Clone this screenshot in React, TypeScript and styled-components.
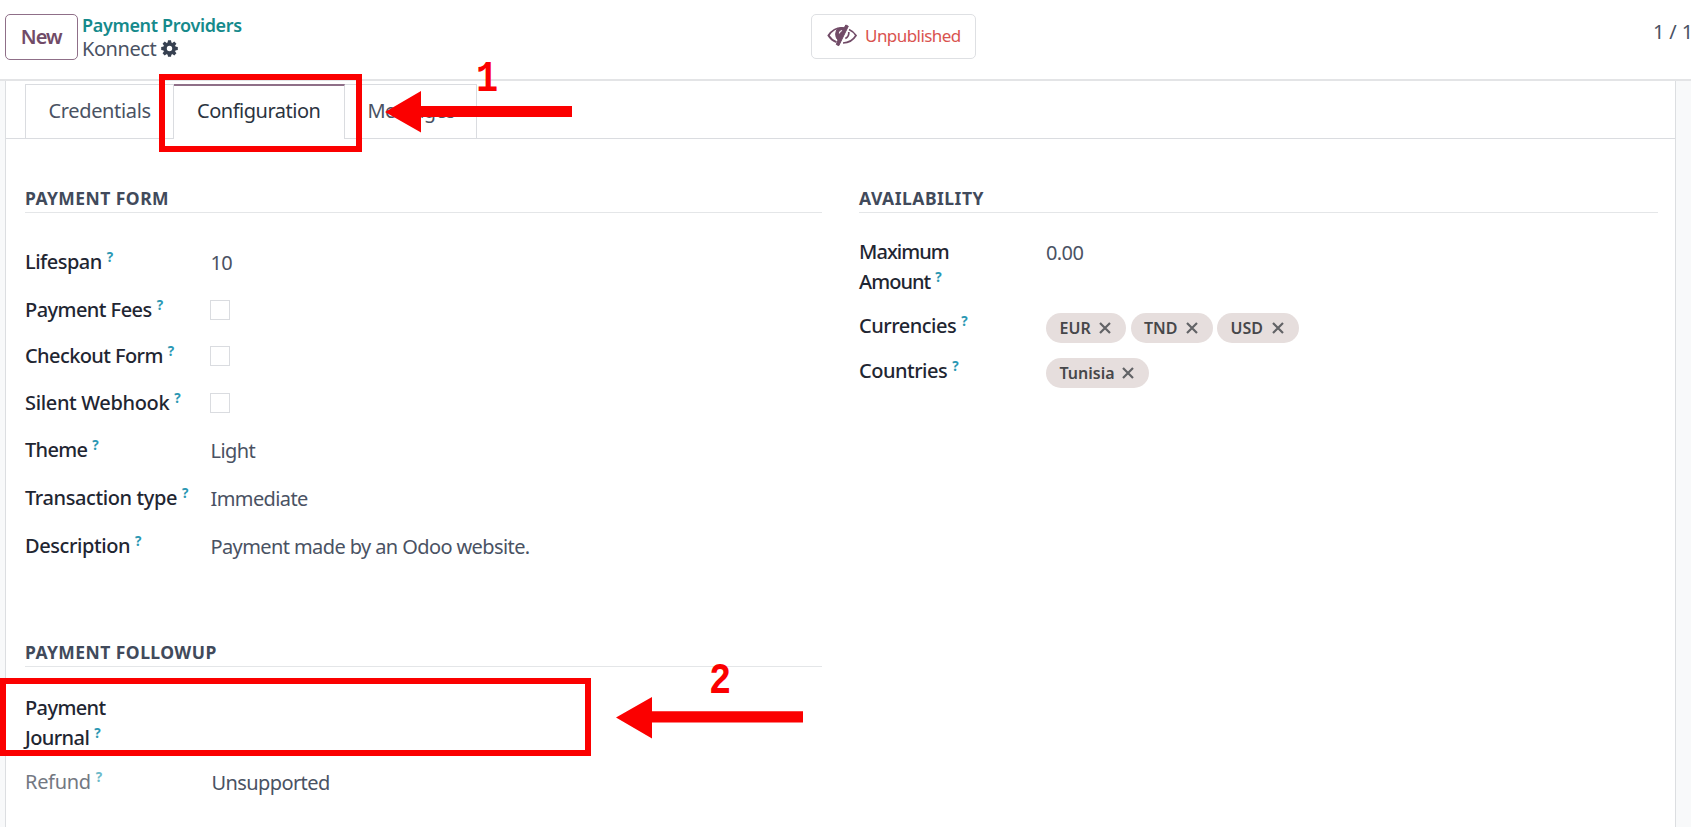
import React from "react";
import styled, { createGlobalStyle } from "styled-components";

const Global = createGlobalStyle`
  * { box-sizing: border-box; }
  html, body { margin: 0; height: 100%; overflow: hidden; }
  body {
    background: #f8f9fa;
    color: #4a5263;
    font-family: "Noto Sans", sans-serif;
    font-size: 20px;
    line-height: 30px;
    letter-spacing: -0.5px;
  }
`;

const Page = styled.div`
  position: relative;
  width: 1691px;
  height: 827px;
  overflow: hidden;
`;

const Header = styled.header`
  display: flex;
  align-items: flex-start;
  height: 81px;
  padding: 14px 0 0 5px;
  background: #fff;
  border-bottom: 2px solid #e3e4e6;
`;

const NewButton = styled.button`
  width: 72.5px;
  height: 46px;
  padding: 0;
  border: 1.5px solid #8f6f88;
  border-radius: 5px;
  background: #fff;
  color: #714b67;
  font: 600 20px/30px "Noto Sans", sans-serif;
  letter-spacing: -0.9px;
`;

const Breadcrumb = styled.div`
  display: flex;
  flex-direction: column;
  width: 729px;
  margin-left: 4.5px;
  line-height: 23px;
`;

const ParentLink = styled.a`
  color: #158a8c;
  font-size: 18px;
  font-weight: 600;
  letter-spacing: -0.33px;
`;

const Current = styled.span`
  display: flex;
  align-items: center;
  gap: 5px;
  letter-spacing: -0.45px;
`;

const StatButton = styled.button`
  display: flex;
  align-items: center;
  width: 165px;
  height: 45px;
  padding: 0 0 1px 15px;
  gap: 7px;
  border: 1.5px solid #dee0e3;
  border-radius: 5px;
  background: #fff;
  color: #d9534f;
  font: 400 17px/24px "Noto Sans", sans-serif;
  letter-spacing: -0.55px;
`;

const Pager = styled.div`
  width: 38px;
  margin: 3px 0 0 auto;
  white-space: nowrap;
  letter-spacing: -0.15px;
`;

const Sheet = styled.main`
  width: 1671px;
  height: 746px;
  margin-left: 5px;
  background: #fff;
  border: solid #dcdee1;
  border-width: 0 1px;
`;

const Tabs = styled.nav`
  display: flex;
  height: 58px;
  padding: 3px 0 0 19px;
  border-bottom: 1px solid #dadce0;
`;

const Tab = styled.div<{ $w: number; $active?: boolean; $ls: number }>`
  width: ${(p) => p.$w}px;
  height: ${(p) => (p.$active ? 55 : 54)}px;
  padding: ${(p) => (p.$active ? 9.5 : 10.5)}px 0 0 ${(p) => (p.$active ? 23 : 22.5)}px;
  border: 1px solid #dadce0;
  border-bottom: 0;
  border-top: ${(p) => (p.$active ? "2px solid #8f6f88" : "1px solid #dadce0")};
  background: #fff;
  color: ${(p) => (p.$active ? "#2b3340" : "#4a5263")};
  letter-spacing: ${(p) => p.$ls}px;
  & + & { border-left-width: ${(p) => (p.$active ? 1 : 0)}px; }
`;

const Columns = styled.div`
  display: grid;
  grid-template-columns: 797px 799px;
  column-gap: 37px;
  padding: 44px 17px 0 19px;
`;

const Group = styled.section<{ $top?: number }>`
  margin-top: ${(p) => p.$top ?? 0}px;
`;

const Title = styled.h2<{ $ls: number }>`
  height: 30px;
  margin: 0;
  border-bottom: 1px solid #e4e6e8;
  color: #414a5b;
  font-size: 17.5px;
  font-weight: 700;
  letter-spacing: ${(p) => p.$ls}px;
`;

const Field = styled.div<{ $h: number; $col: number }>`
  display: grid;
  grid-template-columns: ${(p) => p.$col}px 1fr;
  height: ${(p) => p.$h}px;
`;

const Label = styled.label<{ $muted?: boolean; $ls?: number }>`
  color: ${(p) => (p.$muted ? "#737882" : "#1f2632")};
  font-weight: ${(p) => (p.$muted ? 400 : 500)};
  letter-spacing: ${(p) => p.$ls ?? -0.55}px;
  white-space: pre-line;
`;

const Help = styled.sup<{ $muted?: boolean }>`
  margin-left: 5px;
  color: ${(p) => (p.$muted ? "#6cbac9" : "#2b98b3")};
  font-size: 13.5px;
  font-weight: 700;
  line-height: 0;
  vertical-align: 7px;
`;

const Value = styled.div`
  padding-top: 1px;
  letter-spacing: -0.6px;
`;

const Checkbox = styled.span`
  display: block;
  width: 20px;
  height: 20px;
  margin-top: 5px;
  margin-left: -1px;
  border: 1px solid #dadce0;
  background: #fff;
`;

const Tags = styled.div`
  display: flex;
  gap: 4.5px;
  padding-top: 2px;
`;

const Tag = styled.span<{ $w: number }>`
  display: flex;
  align-items: center;
  justify-content: space-between;
  width: ${(p) => p.$w}px;
  height: 30px;
  padding: 0 15px 1px 13.5px;
  border-radius: 15px;
  background: #e6dedd;
  color: #46474a;
  font-size: 16px;
  font-weight: 600;
  letter-spacing: 0;
`;

const Annotations = styled.svg`
  position: absolute;
  inset: 0;
  pointer-events: none;
`;

const teeth = [0, 45, 90, 135, 180, 225, 270, 315];
const Gear = () => (
  <svg width="17" height="17" viewBox="-8.5 -8.5 17 17" fill="#374151">
    <circle r="4.500" fill="none" stroke="#374151" strokeWidth="3.600" />
    {teeth.map((a) => (
      <path key={a} d="M-2-5.500-1.500-8.300H1.500L2-5.500Z" transform={`rotate(${a})`} />
    ))}
  </svg>
);

const EyeSlash = () => (
  <svg width="31" height="24" viewBox="0 0 31 24" fill="none" stroke="#714b67" strokeWidth="2">
    <path d="M17.500 4.200C9.500 2.600 4 7.500 1.500 11.500c1.800 3 4.700 5.300 8 6.600" />
    <path d="M10 5.500C7.800 9.500 8.600 13.800 11 16L9.300 20.500l2.500 1.200L21.300 2.200 18.800 1 17 4.200C14 3.400 11.500 4 10 5.500Z" fill="#714b67" strokeWidth="1" />
    <path d="M12.300 9.300c.3-1.500 1.300-2.500 2.800-2.800" stroke="#fff" strokeWidth="1.200" />
    <path d="M22 5.500c3 1.300 5.400 3.500 7 6-2.600 4.200-7 7.400-13 7.500M21.800 8c.3 2.700-1 5.300-3.500 6.500" strokeWidth="1.700" />
  </svg>
);

const Cross = () => (
  <svg width="12" height="12" viewBox="0 0 12 12" stroke="#626366" strokeWidth="2.200">
    <path d="M1 1 11 11M11 1 1 11" />
  </svg>
);

type FieldProps = {
  label: string;
  h: number;
  col?: number;
  ls?: number;
  muted?: boolean;
  children?: React.ReactNode;
};
const FormField = ({ label, h, col = 185.5, ls, muted, children }: FieldProps) => (
  <Field $h={h} $col={col}>
    <Label $muted={muted} $ls={ls}>
      {label}
      <Help $muted={muted}>?</Help>
    </Label>
    {children}
  </Field>
);

const Rows = styled.div<{ $top: number }>`
  padding-top: ${(p) => p.$top}px;
`;

export default function App() {
  return (
    <Page>
      <Global />
      <Header>
        <NewButton>New</NewButton>
        <Breadcrumb>
          <ParentLink>Payment Providers</ParentLink>
          <Current>
            Konnect <Gear />
          </Current>
        </Breadcrumb>
        <StatButton>
          <EyeSlash />
          Unpublished
        </StatButton>
        <Pager>1 / 1</Pager>
      </Header>
      <Sheet>
        <Tabs>
          <Tab $w={149} $ls={-0.35}>Credentials</Tab>
          <Tab $w={171} $ls={-0.48} $active>Configuration</Tab>
          <Tab $w={132} $ls={-0.7}>Messages</Tab>
        </Tabs>
        <Columns>
          <div>
            <Group>
              <Title $ls={0.45}>PAYMENT FORM</Title>
              <Rows $top={34}>
                <FormField label="Lifespan" h={47.5} ls={-0.5}><Value>10</Value></FormField>
                <FormField label="Payment Fees" h={46.5}><Checkbox /></FormField>
                <FormField label="Checkout Form" h={47} ls={-0.6}><Checkbox /></FormField>
                <FormField label="Silent Webhook" h={47} ls={-0.35}><Checkbox /></FormField>
                <FormField label="Theme" h={48} ls={-0.7}><Value>Light</Value></FormField>
                <FormField label="Transaction type" h={48} ls={-0.4}><Value>Immediate</Value></FormField>
                <FormField label="Description" h={30} ls={-0.42}><Value>Payment made by an Odoo website.</Value></FormField>
              </Rows>
            </Group>
            <Group $top={76}>
              <Title $ls={0.45}>PAYMENT FOLLOWUP</Title>
              <Rows $top={25.5}>
                <FormField label={"Payment\nJournal"} h={74} ls={-0.6} />
                <FormField label="Refund" h={30} col={186.5} ls={-0.3} muted><Value>Unsupported</Value></FormField>
              </Rows>
            </Group>
          </div>
          <Group>
            <Title $ls={0.5}>AVAILABILITY</Title>
            <Rows $top={24}>
              <FormField label={"Maximum\nAmount"} h={74} col={187} ls={-0.95}><Value>0.00</Value></FormField>
              <FormField label="Currencies" h={45} col={187} ls={-0.5}>
                <Tags>
                  <Tag $w={80}>EUR<Cross /></Tag>
                  <Tag $w={82}>TND<Cross /></Tag>
                  <Tag $w={82}>USD<Cross /></Tag>
                </Tags>
              </FormField>
              <FormField label="Countries" h={45} col={187} ls={-0.5}>
                <Tags><Tag $w={103}>Tunisia<Cross /></Tag></Tags>
              </FormField>
            </Rows>
          </Group>
        </Columns>
      </Sheet>
      <Annotations width="1691" height="827" fill="#fb0000">
        <rect x="162" y="77" width="197" height="72" fill="none" stroke="#fb0000" strokeWidth="6" />
        <path d="M385 112 421 91V106H572V117H421V132.500Z" />
        <rect x="3" y="681" width="585" height="72" fill="none" stroke="#fb0000" strokeWidth="6" />
        <path d="M616 717.500 652 697V711.300H803V722.500H652V738.500Z" />
        <g fontFamily='"Liberation Mono", monospace' fontSize="44" fontWeight="700">
          <text x="0" y="0" transform="translate(476 91) scale(.84 1)">1</text>
          <text x="0" y="0" transform="translate(709 693) scale(.84 1)">2</text>
        </g>
      </Annotations>
    </Page>
  );
}
